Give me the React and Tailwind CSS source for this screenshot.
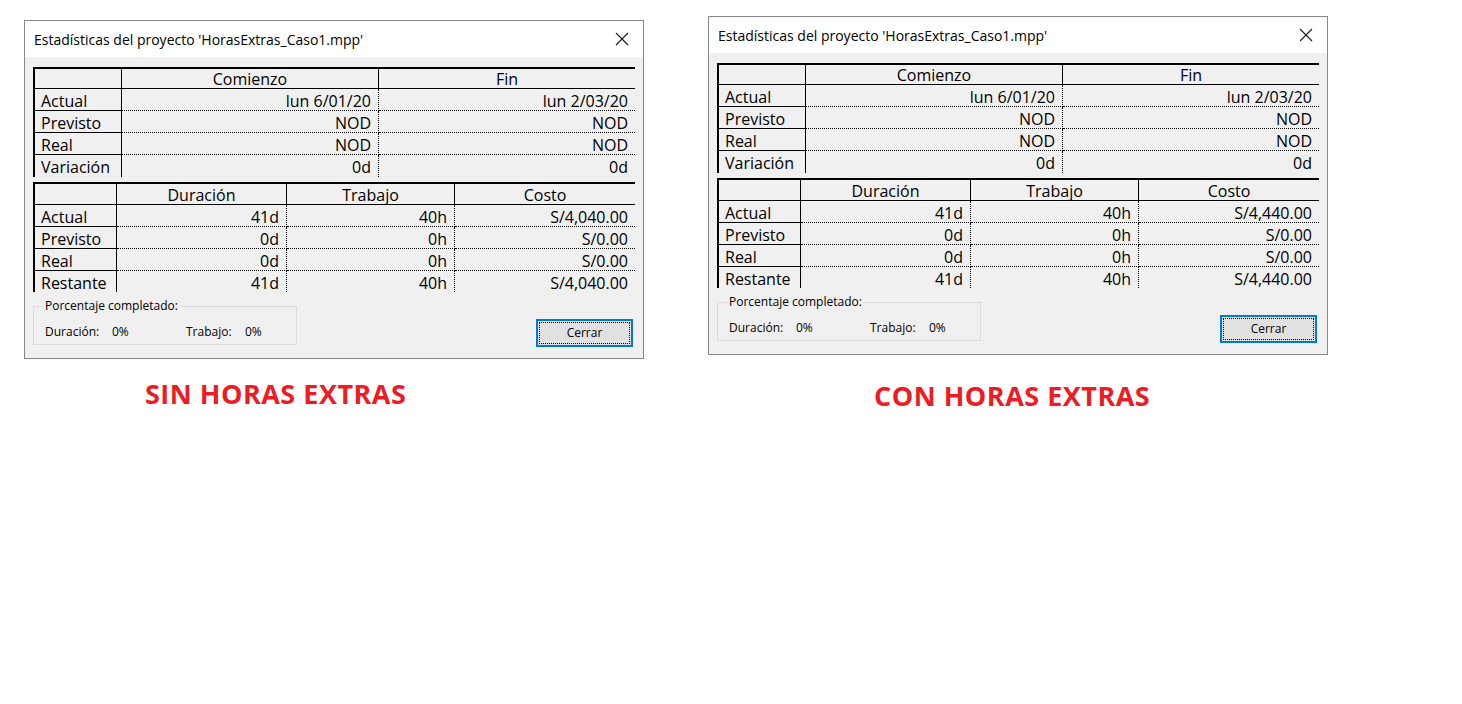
import React from "react";

const FONT = "font-['Segoe_UI','Open_Sans',sans-serif]";

function CloseIcon() {
  return (
    <svg width="14" height="14" viewBox="0 0 14 14" className="block">
      <path d="M1 1 L13 13 M13 1 L1 13" stroke="#1a1a1a" strokeWidth="1.1" fill="none" />
    </svg>
  );
}

function DateTable() {
  const rows = [
    ["Actual", "lun 6/01/20", "lun 2/03/20"],
    ["Previsto", "NOD", "NOD"],
    ["Real", "NOD", "NOD"],
    ["Variación", "0d", "0d"],
  ];
  return (
    <div className="w-[602px] border-t-2 border-l-2 border-black grid grid-cols-[87px_257px_256px] text-[16px] text-black">
      <div className="h-[20px] border-r border-b border-black" />
      <div className="h-[20px] border-r border-b border-black text-center leading-[21px]">Comienzo</div>
      <div className="h-[20px] border-b border-black text-center leading-[21px]">Fin</div>
      {rows.map((r, i) => {
        const last = i === rows.length - 1;
        return (
          <React.Fragment key={r[0]}>
            <div className={`h-[22px] border-r border-black pl-[6px] leading-[24px] ${last ? "" : "border-b"}`}>{r[0]}</div>
            <div className={`h-[22px] border-r border-dotted border-black text-right pr-[7px] leading-[24px] ${last ? "" : "border-b"}`}>{r[1]}</div>
            <div className={`h-[22px] border-dotted border-black text-right pr-[7px] leading-[24px] ${last ? "" : "border-b"}`}>{r[2]}</div>
          </React.Fragment>
        );
      })}
    </div>
  );
}

function WorkTable({ cost }) {
  const rows = [
    ["Actual", "41d", "40h", cost],
    ["Previsto", "0d", "0h", "S/0.00"],
    ["Real", "0d", "0h", "S/0.00"],
    ["Restante", "41d", "40h", cost],
  ];
  return (
    <div className="w-[602px] border-t-2 border-l-2 border-black grid grid-cols-[82px_170px_168px_180px] text-[16px] text-black">
      <div className="h-[21px] border-r border-b border-black" />
      <div className="h-[21px] border-r border-b border-black text-center leading-[22px]">Duración</div>
      <div className="h-[21px] border-r border-b border-black text-center leading-[22px]">Trabajo</div>
      <div className="h-[21px] border-b border-black text-center leading-[22px]">Costo</div>
      {rows.map((r, i) => {
        const last = i === rows.length - 1;
        const h = last ? "h-[21px]" : "h-[22px] border-b";
        return (
          <React.Fragment key={r[0]}>
            <div className={`${h} border-r border-black pl-[6px] leading-[24px]`}>{r[0]}</div>
            <div className={`${h} border-r border-dotted border-black text-right pr-[7px] leading-[24px]`}>{r[1]}</div>
            <div className={`${h} border-r border-dotted border-black text-right pr-[7px] leading-[24px]`}>{r[2]}</div>
            <div className={`${h} border-dotted border-black text-right pr-[7px] leading-[24px]`}>{r[3]}</div>
          </React.Fragment>
        );
      })}
    </div>
  );
}

function Dialog({ cost }) {
  return (
    <div className={`w-[620px] h-[339px] border border-[#868686] bg-[#f0f0f0] flex flex-col ${FONT}`}>
      <div className="h-[36px] bg-white flex items-center justify-between pl-[9px] pr-[14px]">
        <span className="text-[14px] text-black">Estadísticas del proyecto 'HorasExtras_Caso1.mpp'</span>
        <CloseIcon />
      </div>
      <div className="px-[8px] pt-[10px] flex flex-col">
        <DateTable />
        <div className="mt-[5px]">
          <WorkTable cost={cost} />
        </div>
        <div className="flex justify-between items-start">
          <fieldset className="mt-[6px] w-[264px] h-[47px] border border-[#dcdcdc] px-[11px] text-[12px] text-black">
            <legend className="ml-[-2px] px-[2px] leading-[16px]">Porcentaje completado:</legend>
            <div className="flex mt-[9px]">
              <span className="w-[67px]">Duración:</span>
              <span className="w-[74px]">0%</span>
              <span className="w-[59px]">Trabajo:</span>
              <span>0%</span>
            </div>
          </fieldset>
          <button className="mt-[27px] mr-[2px] w-[97px] h-[28px] border-2 border-[#0078d7] bg-[#e1e1e1] p-[1px]">
            <div className="w-full h-full border border-dotted border-black flex items-center justify-center text-[12px] text-black">
              Cerrar
            </div>
          </button>
        </div>
      </div>
    </div>
  );
}

export default function App() {
  return (
    <div className="w-[1462px] h-[704px] bg-white pt-[16px] pl-[24px] flex items-start gap-[64px]">
      <div className="mt-[4px] flex flex-col">
        <Dialog cost="S/4,040.00" />
        <div className="mt-[20px] ml-[121px] text-[27px] tracking-[0.5px] leading-[30px] font-bold text-[#ed1c24] font-['Open_Sans',sans-serif]">
          SIN HORAS EXTRAS
        </div>
      </div>
      <div className="flex flex-col">
        <Dialog cost="S/4,440.00" />
        <div className="mt-[26px] ml-[166px] text-[27px] tracking-[0.5px] leading-[30px] font-bold text-[#ed1c24] font-['Open_Sans',sans-serif]">
          CON HORAS EXTRAS
        </div>
      </div>
    </div>
  );
}
